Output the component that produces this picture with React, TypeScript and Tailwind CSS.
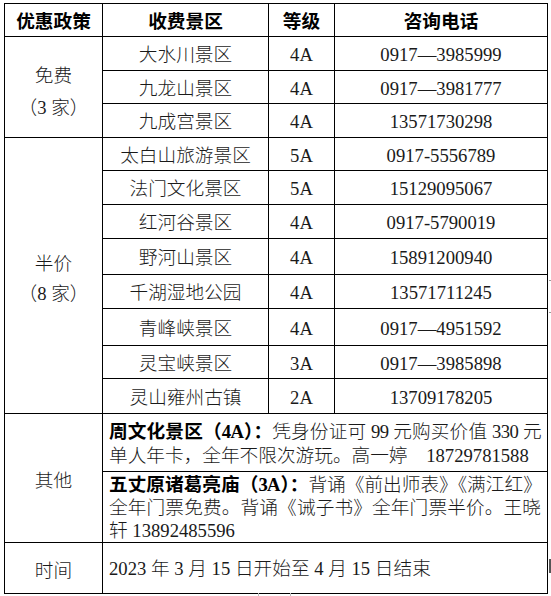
const font = { fontFamily: '"Liberation Serif", "Noto Sans CJK SC", serif' };

const freeRows = [
  { name: "大水川景区", level: "4A", phone: "0917—3985999", h: "h-[34px]" },
  { name: "九龙山景区", level: "4A", phone: "0917—3981777", h: "h-[33px]" },
  { name: "九成宫景区", level: "4A", phone: "13571730298", h: "h-[34px]" },
];

const halfRows = [
  { name: "太白山旅游景区", level: "5A", phone: "0917-5556789", h: "h-[33px]" },
  { name: "法门文化景区", level: "5A", phone: "15129095067", h: "h-[34px]" },
  { name: "红河谷景区", level: "4A", phone: "0917-5790019", h: "h-[34px]" },
  { name: "野河山景区", level: "4A", phone: "15891200940", h: "h-[36px]" },
  { name: "千湖湿地公园", level: "4A", phone: "13571711245", h: "h-[34px]" },
  { name: "青峰峡景区", level: "4A", phone: "0917—4951592", h: "h-[37px]" },
  { name: "灵宝峡景区", level: "3A", phone: "0917—3985898", h: "h-[33px]" },
  { name: "灵山雍州古镇", level: "2A", phone: "13709178205", h: "h-[35px]" },
];

const cell = "border border-black text-center align-middle p-0 pt-[3px]";

const SpotRow = ({ row, first }: { row: (typeof freeRows)[number]; first?: React.ReactNode }) => (
  <tr className={row.h}>
    {first}
    <td className={cell}>{row.name}</td>
    <td className={cell}>{row.level}</td>
    <td className={cell}>{row.phone}</td>
  </tr>
);

const Line = ({ children, fill = true, className = "" }: { children: React.ReactNode; fill?: boolean; className?: string }) => (
  <div className={`${fill ? "text-justify [text-align-last:justify]" : "text-left"} ${className}`}>{children}</div>
);

export default function App() {
  return (
    <div className="relative w-[551px] h-[596px] bg-white pt-[3px] pl-[4px] text-[#1a1a1a] font-light" style={font}>
      <table className="table-fixed border-collapse w-[543px] text-[18.67px] leading-[24px]">
        <colgroup>
          <col className="w-[98px]" />
          <col className="w-[166px]" />
          <col className="w-[66px]" />
          <col className="w-[213px]" />
        </colgroup>
        <tbody>
          <tr className="h-[33px] font-bold text-black">
            <td className={cell}>优惠政策</td>
            <td className={cell}>收费景区</td>
            <td className={cell}>等级</td>
            <td className={cell}>咨询电话</td>
          </tr>
          {freeRows.map((row, i) => (
            <SpotRow
              key={row.name}
              row={row}
              first={
                i === 0 ? (
                  <td rowSpan={3} className={`${cell} leading-[32px] pt-[9px]`}>
                    <div>免费</div>
                    <div>（3 家）</div>
                  </td>
                ) : undefined
              }
            />
          ))}
          {halfRows.map((row, i) => (
            <SpotRow
              key={row.name}
              row={row}
              first={
                i === 0 ? (
                  <td rowSpan={8} className={`${cell} leading-[30px] pt-[6px]`}>
                    <div>半价</div>
                    <div>（8 家）</div>
                  </td>
                ) : undefined
              }
            />
          ))}
          <tr className="h-[58px]">
            <td rowSpan={2} className={`${cell} pt-[6px]`}>其他</td>
            <td colSpan={3} className="border border-black align-top pl-[6px] pr-[6px] pt-[6px] pb-[3px]">
              <Line className="tracking-[-0.6px]">
                <b className="font-bold text-black">周文化景区（4A）：</b>凭身份证可 99 元购买价值 330 元
              </Line>
              <Line fill={false}>单人年卡，全年不限次游玩。高一婷　18729781588</Line>
            </td>
          </tr>
          <tr className="h-[70px]">
            <td colSpan={3} className="border border-black align-top pl-[6px] pr-[6px] pt-[1px] leading-[23px]">
              <Line className="tracking-[-0.8px]">
                <b className="font-bold text-black">五丈原诸葛亮庙（3A）：</b>背诵《前出师表》《满江红》
              </Line>
              <Line>全年门票免费。背诵《诫子书》全年门票半价。王晓</Line>
              <Line fill={false}>轩 13892485596</Line>
            </td>
          </tr>
          <tr className="h-[51px]">
            <td className={`${cell} pt-[6px]`}>时间</td>
            <td colSpan={3} className="border border-black align-middle pl-[6px] pt-[2px] text-left">
              2023 年 3 月 15 日开始至 4 月 15 日结束
            </td>
          </tr>
        </tbody>
      </table>
      <div className="absolute left-[549px] top-[559px] w-[2px] h-[14px] bg-[#555]" />
      <div className="absolute left-[549px] top-[280px] w-[2px] h-px bg-[#999]" />
      <div className="absolute left-[549px] top-[312px] w-[2px] h-px bg-[#999]" />
      <div className="absolute left-[258px] top-[593px] w-px h-[3px] bg-[#bbb]" />
      <div className="absolute left-[290px] top-[593px] w-px h-[3px] bg-[#bbb]" />
    </div>
  );
}
